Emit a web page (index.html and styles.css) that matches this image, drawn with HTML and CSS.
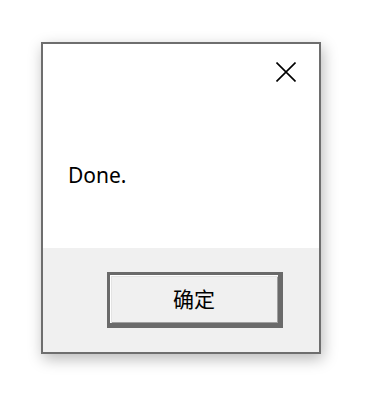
FILE: index.html
```html
<!DOCTYPE html>
<html>
<head>
<meta charset="utf-8">
<link rel="stylesheet" href="styles.css">
</head>
<body>
<div class="dialog">
  <div class="content">
    <div class="titlebar">
      <svg class="close" width="20" height="20" viewBox="0 0 20 20" aria-label="Close">
        <path d="M0.5 0.5 L19.5 19.5 M19.5 0.5 L0.5 19.5" stroke="#000" stroke-width="1.6" fill="none"/>
      </svg>
    </div>
    <div class="message">Done.</div>
  </div>
  <div class="footer">
    <button class="btn">确定</button>
  </div>
</div>
</body>
</html>
```
FILE: styles.css
```css
html, body {
  margin: 0;
  padding: 0;
  background: #ffffff;
}
body {
  width: 367px;
  height: 410px;
  overflow: hidden;
  padding-top: 42px;
  padding-left: 41px;
  box-sizing: border-box;
  font-family: "Noto Sans", "Open Sans", sans-serif;
}
.dialog {
  width: 280px;
  height: 312px;
  box-sizing: border-box;
  border: 2px solid #6e6e6e;
  background: #ffffff;
  box-shadow: 2px 5px 14px rgba(0, 0, 0, 0.28);
  display: flex;
  flex-direction: column;
}
.content {
  height: 204px;
  background: #ffffff;
}
.titlebar {
  display: flex;
  justify-content: flex-end;
  padding-top: 18px;
  padding-right: 23px;
}
.close {
  display: block;
}
.message {
  margin-top: 81px;
  padding-left: 25px;
  font-size: 21px;
  line-height: 24px;
  color: #000;
}
.footer {
  flex: 1;
  background: #f0f0f0;
  padding-top: 24px;
  padding-left: 64px;
}
.btn {
  display: block;
  width: 176px;
  height: 56px;
  box-sizing: border-box;
  margin: 0;
  padding: 0 0 3px 0;
  border-style: solid;
  border-color: #6a6a6a;
  border-width: 3px 5px 5px 3px;
  background: #f0f0f0;
  box-shadow: inset 1px 1px #ffffff, inset 2px 2px #e3e3e3, inset -1px -1px #a0a0a0;
  font-family: "Noto Sans CJK SC", "Noto Sans", sans-serif;
  font-size: 21px;
  color: #000;
}
```
